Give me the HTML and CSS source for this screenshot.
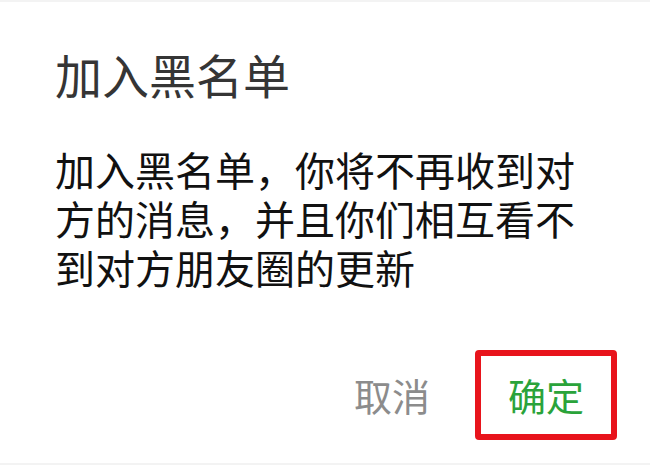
FILE: index.html
```
<!DOCTYPE html>
<html lang="zh-CN">
<head>
<meta charset="utf-8">
<link rel="stylesheet" href="styles.css">
</head>
<body>
<div class="dialog">
  <div class="title">加入黑名单</div>
  <div class="message">加入黑名单，你将不再收到对方的消息，并且你们相互看不到对方朋友圈的更新</div>
  <div class="actions">
    <span class="btn cancel">取消</span>
    <span class="btn confirm">确定</span>
  </div>
</div>
</body>
</html>
```
FILE: styles.css
```
html, body {
  margin: 0;
  padding: 0;
  background: #ffffff;
}
body {
  width: 650px;
  height: 465px;
  overflow: hidden;
  font-family: "Noto Sans CJK SC", "Noto Sans", sans-serif;
}
.dialog {
  box-sizing: border-box;
  width: 650px;
  height: 465px;
  padding: 50px 33px 0 55px;
  border-top: 2px solid #f3f3f3;
  border-bottom: 2px solid #f3f3f3;
  display: flex;
  flex-direction: column;
}
.title {
  font-size: 47px;
  line-height: 47px;
  color: #353535;
  margin-top: -2px;
}
.message {
  margin-top: 48px;
  font-size: 40px;
  line-height: 49px;
  color: #111111;
  width: 525px;
}
.actions {
  margin-top: 58px;
  display: flex;
  justify-content: flex-end;
  align-items: center;
  gap: 45px;
}
.btn {
  font-size: 38px;
  line-height: 1;
}
.cancel {
  color: #8c8c8c;
}
.confirm {
  color: #2aa33a;
  box-sizing: border-box;
  width: 142px;
  height: 90px;
  border: 6px solid #e8141c;
  border-radius: 4px;
  display: flex;
  align-items: center;
  justify-content: center;
}
```
